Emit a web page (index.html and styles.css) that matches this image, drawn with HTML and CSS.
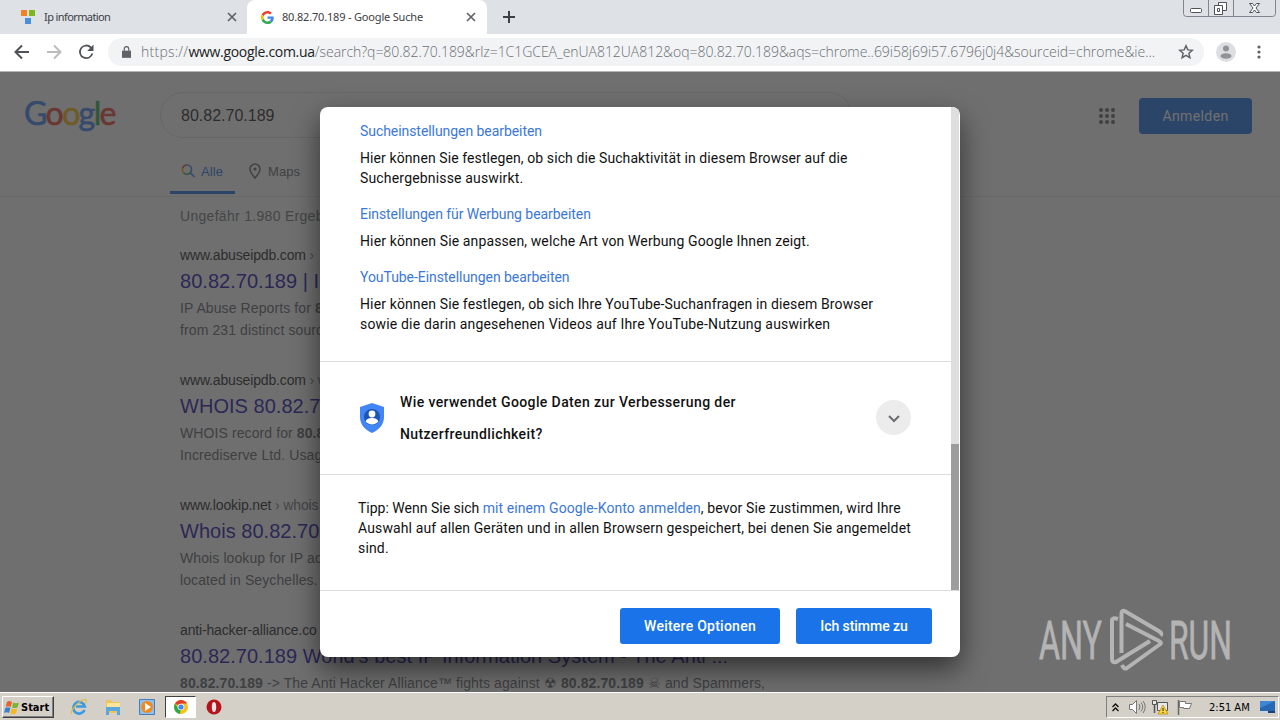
FILE: index.html
```html
<!DOCTYPE html>
<html lang="de">
<head>
  <meta charset="UTF-8">
  <meta name="viewport" content="width=device-width, initial-scale=1.0">
  <title>80.82.70.189 - Google Suche</title>
  <link rel="stylesheet" href="styles.css">
</head>
<body>
  <!-- Tabs -->
  <div class="tabstrip">
    <div class="tab">
      <svg class="favicon" width="16" height="16" viewBox="0 0 16 16"><path fill="#f58220" d="M1 1h6v6H1z"/><path fill="#7cb71e" d="M9 1h6v6H9z"/><path fill="#4a90d9" d="M5 9h6v6H5z"/></svg>
      <span class="tab-title t-ip">Ip information</span>
      <svg class="tab-close" width="10" height="10" viewBox="0 0 10 10"><path d="M1 1l8 8M9 1L1 9" stroke="#5f6368" stroke-width="1.7"/></svg>
    </div>
    <div class="tab active">
      <svg class="favicon" width="13" height="13" viewBox="0 0 48 48"><path fill="#ea4335" d="M24 9.500c3.500 0 6.700 1.200 9.200 3.600l6.900-6.900C35.900 2.400 30.500 0 24 0 14.600 0 6.500 5.400 2.600 13.200l8 6.200C12.400 13.700 17.700 9.500 24 9.500z"/><path fill="#4285f4" d="M47 24.600c0-1.600-.2-3.100-.4-4.600H24v9h12.900c-.6 3-2.300 5.500-4.800 7.200l7.700 6C44.400 38 47 32 47 24.600z"/><path fill="#fbbc05" d="M10.500 28.600A14.500 14.500 0 0 1 10.500 19.400l-8-6.200a24 24 0 0 0 0 21.600z"/><path fill="#34a853" d="M24 48c6.500 0 11.900-2.100 15.900-5.800l-7.700-6c-2.200 1.500-4.900 2.300-8.200 2.300-6.300 0-11.600-4.200-13.500-9.900l-8 6.200C6.500 42.600 14.600 48 24 48z"/></svg>
      <span class="tab-title t-search">80.82.70.189 - Google Suche</span>
      <svg class="tab-close" width="10" height="10" viewBox="0 0 10 10"><path d="M1 1l8 8M9 1L1 9" stroke="#5f6368" stroke-width="1.700"/></svg>
    </div>
    <svg class="new-tab" width="12" height="12" viewBox="0 0 12 12"><path d="M6 0v12M0 6h12" stroke="#3c4043" stroke-width="2"/></svg>
    <svg class="win-buttons" width="93" height="18" viewBox="0 0 93 18" fill="none" stroke="#7f858f">
      <path d="M.5 0v13.500a3 3 0 0 0 3 3h86a3 3 0 0 0 3-3V0M25.500 0v16.500M50.500 0v16.500"/>
      <g stroke="#4d525b"><rect x="7.500" y="8.500" width="11" height="4" rx="1" fill="#fff"/><path fill="#fff" d="M35.500 2.500h8v8h-8z"/><path fill="#fff" d="M31.500 5.500h8v9h-8zM34.500 8.500h2v3h-2z"/><path fill="#fff" d="M66.500 3.500h3l2 2.500 2-2.500h3l-3.500 4.500 3.500 4.500h-3l-2-2.500-2 2.500h-3L70 8z"/></g>
    </svg>
  </div>

  <!-- Address bar -->
  <div class="toolbar">
    <svg class="nav-icon" width="24" height="24" viewBox="0 0 24 24" fill="none" stroke="#4f5256" stroke-width="2"><path d="M19 12H6M12 5.500L5.500 12l6.500 6.500"/></svg>
    <svg class="nav-icon" width="24" height="24" viewBox="0 0 24 24" fill="none" stroke="#babcbe" stroke-width="2"><path d="M5 12h13M12 5.500l6.500 6.500-6.500 6.500"/></svg>
    <svg class="nav-icon" width="24" height="24" viewBox="0 0 24 24"><path fill="#4f5256" d="M17.650 6.350A8 8 0 1 0 19.730 14h-2.080A6 6 0 1 1 12 6c1.660 0 3.140.690 4.220 1.780L13 11h7V4z" transform="translate(1.500 1) scale(.9)"/></svg>
    <div class="omnibox">
      <svg width="9" height="12" viewBox="0 0 10 13"><path fill="#5f6368" d="M0 5h10v8H0z"/><path d="M2.500 5V3a2.500 2.500 0 0 1 5 0v2" fill="none" stroke="#5f6368" stroke-width="1.400"/></svg>
      <div class="url"><span class="u-scheme">https://</span><span class="u-host">www.google.com.ua</span><span class="u-path">/search?q=80.82.70.189&amp;rlz=1C1GCEA_enUA812UA812&amp;oq=80.82.70.189&amp;aqs=chrome..69i58j69i57.6796j0j4&amp;sourceid=chrome&amp;ie...</span></div>
      <svg class="star" width="16" height="16" viewBox="0 0 16 16"><path fill="none" stroke="#5f6368" stroke-width="1.500" d="M8 1.800l1.800 4.100 4.500.4-3.400 3 1 4.400L8 11.400l-3.900 2.300 1-4.400-3.400-3 4.500-.4z"/></svg>
    </div>
    <svg class="avatar" width="20" height="20" viewBox="0 0 20 20"><circle cx="10" cy="10" r="10" fill="#dcdee1"/><circle cx="10" cy="6.500" r="3" fill="#8f9398"/><ellipse cx="10" cy="14" rx="5.500" ry="2.800" fill="#8f9398"/></svg>
    <svg class="menu" width="4" height="14" viewBox="0 0 4 14" fill="#5f6368"><circle cx="2" cy="2" r="1.600"/><circle cx="2" cy="7" r="1.600"/><circle cx="2" cy="12" r="1.600"/></svg>
  </div>

  <!-- Search page -->
  <div class="page">
    <div class="header">
      <div class="logo"><span class="blue">G</span><span class="red">o</span><span class="yellow">o</span><span class="blue">g</span><span class="green">l</span><span class="red">e</span></div>
      <div class="searchbox">
        <span>80.82.70.189</span>
        <svg width="60" height="22" viewBox="0 0 60 22"><rect x="5" y="2" width="6" height="12" rx="3" fill="#5f6368"/><path d="M2 10a6 6 0 0 0 12 0M8 16v4" fill="none" stroke="#5f6368" stroke-width="2"/><circle cx="45" cy="9" r="6" fill="none" stroke="#5f6368" stroke-width="2"/><path d="M49 13l5 5" stroke="#5f6368" stroke-width="2"/></svg>
      </div>
      <svg class="apps" width="16" height="16" viewBox="0 0 16 16" fill="#5f6368"><circle cx="2" cy="2" r="2"/><circle cx="8" cy="2" r="2"/><circle cx="14" cy="2" r="2"/><circle cx="2" cy="8" r="2"/><circle cx="8" cy="8" r="2"/><circle cx="14" cy="8" r="2"/><circle cx="2" cy="14" r="2"/><circle cx="8" cy="14" r="2"/><circle cx="14" cy="14" r="2"/></svg>
      <div class="signin">Anmelden</div>
    </div>
    <div class="nav">
      <div class="nav-item current">
        <svg width="14" height="14" viewBox="0 0 14 14" fill="none" stroke-width="1.700"><path stroke="#4285f4" d="M6 1a4.500 4.500 0 0 1 4.500 4.500c0 1.500-.5 2.500-1.300 3.300L13.500 13"/><path stroke="#ea4335" d="M1.700 4A4.500 4.500 0 0 1 6 1"/><path stroke="#fbbc05" d="M2.500 8.700A4.500 4.500 0 0 1 1.700 4"/><path stroke="#34a853" d="M9.200 8.800a4.500 4.500 0 0 1-6.700-.1"/></svg>
        <span>Alle</span>
      </div>
      <div class="nav-item">
        <svg width="12" height="16" viewBox="0 0 12 16"><path fill="none" stroke="#5f6368" stroke-width="1.500" d="M6 1a5 5 0 0 0-5 5c0 3.300 5 9 5 9s5-5.700 5-9a5 5 0 0 0-5-5z"/><circle cx="6" cy="6" r="1.600" fill="#5f6368"/></svg>
        <span>Maps</span>
      </div>
    </div>
    <div class="results">
      <div class="stats">Ungefähr 1.980 Ergeb</div>
      <div class="result">
        <div class="cite">www.abuseipdb.com <span>›</span></div>
        <div class="title">80.82.70.189 | I</div>
        <div class="desc">IP Abuse Reports for <b>8</b><br>from 231 distinct sourc</div>
      </div>
      <div class="result">
        <div class="cite">www.abuseipdb.com <span>› w</span></div>
        <div class="title">WHOIS 80.82.7</div>
        <div class="desc">WHOIS record for <b>80.8</b><br>Incrediserve Ltd. Usag</div>
      </div>
      <div class="result">
        <div class="cite">www.lookip.net <span>› whois</span></div>
        <div class="title">Whois 80.82.70</div>
        <div class="desc">Whois lookup for IP ad<br>located in Seychelles.</div>
      </div>
      <div class="result">
        <div class="cite">anti-hacker-alliance.co</div>
        <div class="title">80.82.70.189 World's best IP Information System - The Anti ...</div>
        <div class="desc"><b>80.82.70.189</b> -&gt; The Anti Hacker Alliance™ fights against ☢ <b>80.82.70.189</b> ☠ and Spammers,</div>
      </div>
    </div>

    <div class="overlay"></div>

    <!-- Consent dialog -->
    <div class="dialog">
      <div class="dialog-main">
        <div class="dialog-content">
          <div class="settings">
            <a>Sucheinstellungen bearbeiten</a>
            <p><span class="ls-s">Hier können Sie festlegen, ob sich die Suchaktivität in diesem Browser auf die</span><br><span class="ls-l">Suchergebnisse auswirkt.</span></p>
            <a>Einstellungen für Werbung bearbeiten</a>
            <p><span class="ls-m">Hier können Sie anpassen, welche Art von Werbung Google Ihnen zeigt.</span></p>
            <a>YouTube-Einstellungen bearbeiten</a>
            <p><span class="ls-m">Hier können Sie festlegen, ob sich Ihre YouTube-Suchanfragen in diesem Browser</span><br><span class="ls-l">sowie die darin angesehenen Videos auf Ihre YouTube-Nutzung auswirken</span></p>
          </div>
          <div class="question">
            <svg width="24" height="30" viewBox="0 0 24 30"><path fill="#4285f4" d="M12 0L0 4v10c0 7.500 5 13 12 16 7-3 12-8.500 12-16V4z"/><circle cx="12" cy="14" r="8" fill="#1a56b8"/><circle cx="12" cy="11" r="3.400" fill="#fff"/><path fill="#fff" d="M5.800 18.500c0-2.300 3-3.500 6.200-3.500s6.200 1.200 6.200 3.500c-1.200 1.700-3.500 2.900-6.200 2.900s-5-1.200-6.200-2.900z"/></svg>
            <h2>Wie verwendet Google Daten zur Verbesserung der<br>Nutzerfreundlichkeit?</h2>
            <div class="expand"><svg width="12" height="8" viewBox="0 0 12 8"><path d="M1 1l5 5 5-5" fill="none" stroke="#6b6f74" stroke-width="2"/></svg></div>
          </div>
          <div class="tip"><span>Tipp: Wenn Sie sich <a class="ls-s">mit einem Google-Konto anmelden</a><span class="ls-m">, bevor Sie zustimmen, wird Ihre</span></span><br><span class="ls-m">Auswahl auf allen Geräten und in allen Browsern gespeichert, bei denen Sie angemeldet</span><br><span class="ls-l">sind.</span></div>
        </div>
        <div class="scrollbar"><div class="thumb"></div></div>
      </div>
      <div class="dialog-footer">
        <button class="more">Weitere Optionen</button>
        <button class="agree">Ich stimme zu</button>
      </div>
    </div>

    <svg class="watermark" width="240" height="70" viewBox="0 0 240 70">
      <text x="4" y="51" textLength="63" lengthAdjust="spacingAndGlyphs">ANY</text>
      <text x="134" y="51" textLength="63" lengthAdjust="spacingAndGlyphs">RUN</text>
      <path fill="none" stroke="#b4b4b4" stroke-width="4" stroke-linejoin="round" d="M83 11q-6-2-6 2v38q0 4 4 3l34-21M86.500 45V5.500q0-4 4-2l34 20q3 2 1 4M91 16l33 17q4 2 0 4L92 60q-3 2-5-3"/>
    </svg>
  </div>

  <!-- Taskbar -->
  <div class="taskbar">
    <div class="start">
      <svg width="16" height="15" viewBox="0 0 16 15"><path fill="#e8622c" d="M3 2q2-2 5 0L6.700 7Q4 5.500 1.700 7z"/><path fill="#7db53c" d="M9 2.500q3 1.500 6 0L13.500 7.500q-3 1.200-5.500 0z"/><path fill="#3a7fd0" d="M1.300 8Q4 6.500 6.400 8L5 13q-3-1.500-5 0z"/><path fill="#f5b921" d="M7.600 8.500q2.600 1.200 5.600 0L12 13.500q-3 1.300-5.700 0z"/></svg>
      <span>Start</span>
    </div>
    <svg class="task-icon" width="18" height="18" viewBox="0 0 18 18" fill="none"><path d="M14.500 12a5.800 5.800 0 1 1 .3-3.500H6" stroke="#3c9be0" stroke-width="2.700"/><path d="M1.500 16C0 13 9 2 15 1.500c2 0 1.500 2.500.5 4" stroke="#e8b93c" stroke-width="1.200"/></svg>
    <svg class="task-icon" width="18" height="18" viewBox="0 0 18 18"><path fill="#edc558" d="M2 2h5l1 2h8v11H2z"/><path fill="#fbe59a" d="M3 5h13v7H3z"/><path fill="#59a7dc" d="M2 9h14v8h-3v-4H5v4H2z"/></svg>
    <svg class="task-icon" width="18" height="18" viewBox="0 0 18 18"><path fill="#8cc0ee" stroke="#4b7cb8" d="M1.500 1.500h15v15h-15z"/><circle cx="9" cy="9" r="6" fill="#f08a1d"/><path fill="#fff" d="M7 5l6 4-6 4z"/></svg>
    <div class="task-active">
      <svg width="14" height="14" viewBox="0 0 14 14"><circle cx="7" cy="7" r="7" fill="#fbc116"/><path fill="#e33b2e" d="M7 7L1 3.500A7 7 0 0 1 13.100 3.600H7z"/><path fill="#2da94f" d="M7 7v0l-1 7A7 7 0 0 1 1 3.500L4 8z"/><circle cx="7" cy="7" r="3.300" fill="#fff"/><circle cx="7" cy="7" r="2.600" fill="#4285f4"/></svg>
    </div>
    <svg class="task-icon opera" width="16" height="16" viewBox="0 0 16 16"><circle cx="8" cy="8" r="7.500" fill="#b5141b"/><ellipse cx="8" cy="8" rx="2.200" ry="5" fill="#f3e4e4"/></svg>
    <div class="tray">
      <svg width="7" height="9" viewBox="0 0 7 9" fill="none" stroke="#111" stroke-width="1.400"><path d="M.5 4l3-3 3 3M.5 8l3-3 3 3"/></svg>
      <svg class="speaker" width="17" height="14" viewBox="0 0 17 14" fill="#fff" stroke="#777"><path d="M.5 4.500h3l4-4v13l-4-4h-3z"/><path fill="none" d="M10 4q2 3 0 6M12 2.500q3.500 4.500 0 9M14 1q4.500 6 0 12"/></svg>
      <svg class="network" width="18" height="16" viewBox="0 0 18 16"><path fill="#e8e8e8" stroke="#555" d="M5.500 3.500h10v8h-10zM.5 1.500h4v4h-4z"/><path d="M2.500 6v8" stroke="#555" stroke-width="1.500"/><path fill="#ffd33b" stroke="#b58a00" stroke-width=".7" d="M11 6l5 9H6z"/><path d="M11 9v3M11 13v1" stroke="#222"/></svg>
      <svg class="flag" width="16" height="15" viewBox="0 0 16 15"><path d="M1.500 0v15" stroke="#666" stroke-width="1.500"/><path fill="#fff" stroke="#777" d="M2.500 1.500h6v2h6l-2 5h-6v-1h-4z"/></svg>
      <span class="clock">2:51 AM</span>
      <svg class="desktop" width="15" height="14" viewBox="0 0 15 14"><path fill="#2668b3" d="M0 1h15v10H0z"/><path fill="#3f86d4" d="M0 1h15L0 8z"/><path fill="#c8d4e0" d="M0 11h8v2H0z"/><path fill="#1d3f73" d="M8 11h7v2H8z"/></svg>
    </div>
  </div>
</body>
</html>
```
FILE: styles.css
```css
body {
  margin: 0;
  width: 1280px;
  height: 720px;
  display: flex;
  flex-direction: column;
  overflow: hidden;
  background-color: #fff;
  font-family: "Liberation Sans", Arial, sans-serif;
}

svg {
  display: block;
  flex: none;
}

/* Tabs */
.tabstrip {
  display: flex;
  height: 34px;
  background-color: #dee1e6;
}

.tab {
  display: flex;
  align-items: center;
  box-sizing: border-box;
  width: 247px;
  padding: 0 10px 0 20px;
  color: #3c4043;
  font-family: "Noto Sans", sans-serif;
  font-size: 11px;
}

.tab.active {
  width: 240px;
  padding: 0 11px 0 14px;
  background-color: #fff;
  border-radius: 8px 8px 0 0;
}

.tab-title {
  margin-left: 8px;
  padding-bottom: 1px;
  flex: 1;
  white-space: nowrap;
}

.t-ip {
  letter-spacing: -0.6px;
}

.t-search {
  letter-spacing: -0.18px;
}

.new-tab {
  margin: 11px 0 0 16px;
}

.win-buttons {
  margin-left: auto;
  margin-right: 4px;
}

/* Toolbar */
.toolbar {
  display: flex;
  align-items: center;
  box-sizing: border-box;
  height: 38px;
  padding: 0 0 1px 10px;
  border-bottom: 1px solid #b5b5b5;
}

.nav-icon {
  margin-right: 8px;
}

.omnibox {
  display: flex;
  align-items: center;
  box-sizing: border-box;
  width: 1096px;
  height: 28px;
  margin-left: 2px;
  padding: 0 10px 0 14px;
  background-color: #f1f3f4;
  border-radius: 14px;
}

.url {
  flex: 1;
  margin-left: 10px;
  padding-bottom: 1px;
  font-family: "Open Sans", sans-serif;
  font-size: 14px;
  font-weight: 300;
  color: #6b6f74;
  white-space: nowrap;
}

.u-scheme {
  letter-spacing: 0.25px;
}

.u-host {
  font-weight: 400;
  letter-spacing: -0.3px;
  color: #202124;
}

.u-path {
  letter-spacing: -0.04px;
}

.avatar {
  margin-left: 12px;
}

.menu {
  margin-left: 21px;
}

/* Search page */
.page {
  position: relative;
  height: 620px;
  overflow: hidden;
  background-color: #fff;
}

.header {
  display: flex;
  align-items: flex-start;
  height: 74px;
  padding: 20px 28px 0 24px;
  box-sizing: border-box;
}

.logo {
  width: 136px;
  height: 46px;
  line-height: 42px;
  font-family: "Lato", sans-serif;
  font-size: 32px;
  letter-spacing: -1.6px;
  -webkit-text-stroke: 0.6px;
  white-space: nowrap;
}

.blue { color: #4285f4; }
.red { color: #ea4335; }
.yellow { color: #fbbc05; }
.green { color: #34a853; }

.searchbox {
  display: flex;
  align-items: center;
  justify-content: space-between;
  box-sizing: border-box;
  width: 692px;
  height: 46px;
  padding: 1px 16px 0 20px;
  border: 1px solid #dfe1e5;
  border-radius: 23px;
  font-size: 16px;
  color: #202124;
}

.apps {
  margin: 16px 24px 0 auto;
}

.signin {
  width: 113px;
  height: 36px;
  margin-top: 6px;
  line-height: 36px;
  border-radius: 4px;
  background-color: #1a73e8;
  color: #fff;
  font-family: "Roboto", sans-serif;
  font-size: 14px;
  letter-spacing: 0.4px;
  text-align: center;
}

.nav {
  display: flex;
  box-sizing: border-box;
  height: 51px;
  padding-left: 170px;
  border-bottom: 1px solid #ebebeb;
}

.nav-item {
  display: flex;
  align-items: center;
  box-sizing: border-box;
  height: 48px;
  padding: 2px 12px 0;
  gap: 7px;
  margin-right: 2px;
  color: #5f6368;
  font-size: 13px;
  letter-spacing: 0.1px;
}

.current {
  width: 65px;
  padding: 5px 11px 0;
  gap: 6px;
  border-bottom: 3px solid #1a73e8;
  color: #1a73e8;
}

.results {
  padding-left: 180px;
  white-space: nowrap;
}

.stats {
  height: 47px;
  line-height: 38px;
  font-size: 14px;
  letter-spacing: 0.3px;
  color: #70757a;
}

.result {
  height: 125px;
}

.cite {
  line-height: 22px;
  font-size: 14px;
  letter-spacing: -0.15px;
  color: #202124;
}

.cite span {
  color: #70757a;
}

.title {
  margin-top: 2px;
  line-height: 27px;
  font-size: 20px;
  letter-spacing: 0.03px;
  color: #1a0dab;
}

.desc {
  margin-top: 2px;
  line-height: 22px;
  font-size: 14px;
  letter-spacing: 0.1px;
  color: #5c6166;
}

.overlay {
  position: absolute;
  inset: 0;
  background-color: rgba(50, 50, 50, 0.7);
}

/* Consent dialog */
.dialog {
  position: absolute;
  left: 320px;
  top: 35px;
  width: 640px;
  height: 550px;
  overflow: hidden;
  border-radius: 8px;
  background-color: #fff;
  box-shadow: 0 12px 28px rgba(0, 0, 0, 0.55);
  color: #111;
  font-family: "Roboto", sans-serif;
  font-size: 14px;
  line-height: 20px;
  white-space: nowrap;
}

.dialog a {
  color: #3b78d8;
}

.dialog-main {
  display: flex;
  height: 483px;
  border-bottom: 1px solid #dadce0;
}

.dialog-content {
  width: 631px;
}

.settings {
  box-sizing: border-box;
  height: 255px;
  padding: 14px 0 0 40px;
  border-bottom: 1px solid #dadce0;
}

.settings > a {
  display: block;
  letter-spacing: -0.06px;
}

.settings p {
  margin: 7px 0 16px;
}

.ls-s {
  letter-spacing: 0.09px;
}

.ls-m {
  letter-spacing: 0.125px;
}

.ls-l {
  letter-spacing: 0.17px;
}

.question {
  display: flex;
  align-items: center;
  box-sizing: border-box;
  height: 113px;
  padding: 0 40px;
  border-bottom: 1px solid #dadce0;
}

.question h2 {
  flex: 1;
  margin: 0 0 0 16px;
  font-size: 14px;
  font-weight: 500;
  letter-spacing: 0.39px;
  line-height: 32px;
}

.expand {
  display: flex;
  align-items: center;
  justify-content: center;
  width: 35px;
  height: 35px;
  margin-bottom: 1px;
  border-radius: 50%;
  background-color: #ececec;
}

.expand svg {
  margin-top: 2px;
}

.tip {
  padding: 23px 0 0 38px;
}

.scrollbar {
  display: flex;
  align-items: flex-end;
  width: 8px;
  background-color: #dedede;
}

.thumb {
  width: 8px;
  height: 146px;
  background-color: #9c9c9c;
}

.dialog-footer {
  display: flex;
  justify-content: flex-end;
  gap: 16px;
  padding: 17px 28px 0 0;
}

.dialog-footer button {
  height: 36px;
  padding: 0;
  border: none;
  border-radius: 3px;
  background-color: #1a73e8;
  color: #fff;
  font-family: "Roboto", sans-serif;
  font-size: 14px;
  font-weight: 500;
}

.dialog-footer .more {
  width: 160px;
  letter-spacing: 0.25px;
}

.dialog-footer .agree {
  width: 136px;
  letter-spacing: -0.05px;
}

.watermark {
  position: absolute;
  left: 1035px;
  top: 536px;
}

.watermark text {
  font-family: "Roboto", sans-serif;
  font-size: 53px;
  fill: #b4b4b4;
  stroke: #b4b4b4;
  stroke-width: 0.8px;
}

/* Taskbar */
.taskbar {
  display: flex;
  align-items: center;
  box-sizing: border-box;
  height: 28px;
  border-top: 1px solid #fff;
  background-color: #d4d0c8;
}

.start {
  display: flex;
  align-items: center;
  gap: 1px;
  box-sizing: border-box;
  width: 52px;
  height: 22px;
  margin: 1px 0 0 2px;
  padding-left: 1px;
  border: 1px solid;
  border-color: #fff #404040 #404040 #fff;
  box-shadow: inset -1px -1px #808080;
  font-family: "DejaVu Sans Condensed", "DejaVu Sans", sans-serif;
  font-size: 11px;
  font-weight: bold;
  color: #000;
}

.task-icon {
  margin: 1px 0 0 16px;
}

.start + .task-icon {
  margin-left: 16px;
}

.task-active {
  display: flex;
  align-items: center;
  justify-content: center;
  box-sizing: border-box;
  width: 31px;
  height: 22px;
  margin: 1px 0 0 9px;
  border: 1px solid;
  border-color: #404040 #fff #fff #404040;
  background-color: #fff;
}

.opera {
  margin-left: 10px;
}

.tray {
  display: flex;
  align-items: center;
  box-sizing: border-box;
  width: 173px;
  height: 22px;
  margin: 1px 1px 0 auto;
  padding-left: 5px;
  border: 1px solid;
  border-color: #808080 #fff #fff #808080;
}

.speaker {
  margin-left: 10px;
}

.network {
  margin-left: 6px;
}

.flag {
  margin-left: 7px;
}

.clock {
  margin-left: 16px;
  font-family: "DejaVu Sans Condensed", "DejaVu Sans", sans-serif;
  font-size: 11px;
  color: #000;
  white-space: nowrap;
}

.desktop {
  margin-left: auto;
  margin-right: 3px;
}
```
